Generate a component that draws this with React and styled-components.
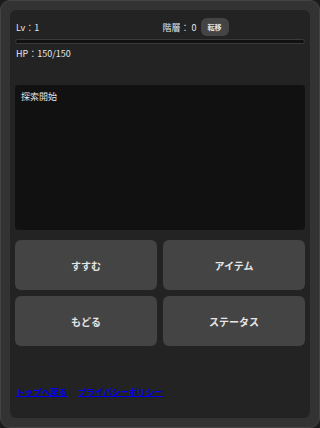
import styled, { createGlobalStyle } from "styled-components";

const Global = createGlobalStyle`
	html, body {
		margin: 0;
		padding: 0;
		background: #1c1c1c;
	}
	* {
		box-sizing: border-box;
	}
	body {
		font-family: "Noto Sans CJK JP", "Noto Sans", sans-serif;
		color: #e6e6e6;
	}
`;

const Frame = styled.div`
	height: 428px;
	background: #333;
	border: 1px solid #444;
	border-radius: 10px;
	padding: 9px;
`;
const Panel = styled.div`
	height: 100%;
	background: #232323;
	border-radius: 6px;
	padding: 7px 5px 0;
	display: flex;
	flex-direction: column;
`;
const TopRow = styled.div`
	display: grid;
	grid-template-columns: 1fr 1fr;
	align-items: center;
	height: 20px;
	font-size: 9px;
	padding-left: 1px;
`;
const Floor = styled.div`
	display: flex;
	align-items: center;
	gap: 4px;
	padding-left: 2px;
`;
const SmallBtn = styled.button`
	font-family: inherit;
	font-size: 7px;
	font-weight: 700;
	color: #e6e6e6;
	background: #444;
	border: none;
	border-radius: 6px;
	height: 18px;
	padding: 0 7px;
`;
const Bar = styled.div`
	margin-top: 2px;
	height: 5px;
	background: #111;
	border: 1px solid #3a3a3a;
	border-radius: 3px;
`;
const Hp = styled.div`
	font-size: 9px;
	margin-top: 3px;
	padding-left: 1px;
	line-height: 14px;
`;
const Log = styled.div`
	margin-top: 24px;
	height: 145px;
	background: #111;
	border-radius: 4px;
	padding: 5px 6px;
	font-size: 9px;
	line-height: 14px;
`;
const Grid = styled.div`
	margin-top: 10px;
	display: grid;
	grid-template-columns: 1fr 1fr;
	grid-auto-rows: 50px;
	gap: 6px;
`;
const ActionBtn = styled.button`
	font-family: inherit;
	font-size: 10px;
	font-weight: 700;
	color: #e6e6e6;
	background: #444;
	border: none;
	border-radius: 6px;
`;
const Links = styled.div`
	margin-top: 39px;
	display: flex;
	gap: 11px;
	padding-left: 1px;
	font-size: 8.5px;
	& > a {
		color: #0000ee;
		font-weight: 700;
	}
`;

const App = () => {
	return (
		<>
			<Global />
			<Frame>
				<Panel>
					<TopRow>
						<span>Lv：1</span>
						<Floor>
							<span>階層： 0</span>
							<SmallBtn>転移</SmallBtn>
						</Floor>
					</TopRow>
					<Bar />
					<Hp>HP：150/150</Hp>
					<Log>探索開始</Log>
					<Grid>
						<ActionBtn>すすむ</ActionBtn>
						<ActionBtn>アイテム</ActionBtn>
						<ActionBtn>もどる</ActionBtn>
						<ActionBtn>ステータス</ActionBtn>
					</Grid>
					<Links>
						<a href="#top">トップへ戻る</a>
						<a href="#privacy">プライバシーポリシー</a>
					</Links>
				</Panel>
			</Frame>
		</>
	);
};
export default App;
